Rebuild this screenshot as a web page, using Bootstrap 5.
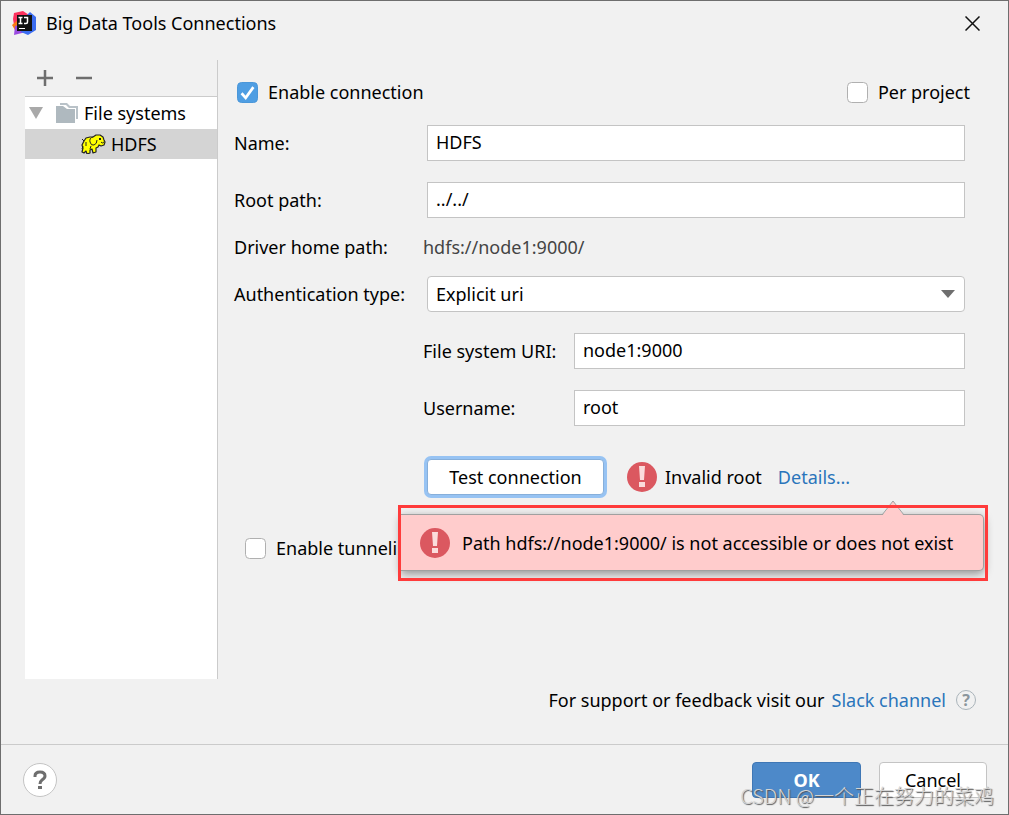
<!DOCTYPE html>
<html lang="en">
<head>
<meta charset="utf-8">
<meta name="viewport" content="width=device-width, initial-scale=1">
<title>Big Data Tools Connections</title>
<link href="https://cdn.jsdelivr.net/npm/bootstrap@5.3.0/dist/css/bootstrap.min.css" rel="stylesheet">
<style>
  body { font-family: "Noto Sans", "Noto Sans CJK SC", sans-serif; font-size: 18px; line-height: 24px; color: #000; background: #f1f1f1; }
  a { color: #2a75bb; }
  svg { display: block; flex: none; }
  .dialog { border: 1px solid #6e6e6e; }
  .titlebar { height: 44px; padding: 0 28px 0 11px; gap: 9px; }
  .icon-btn { border: 0; background: none; padding: 0; }
  .main-area { padding: 15px 32px 0 24px; }
  .tree-pane { width: 193px; margin-bottom: 65px; border-right: 1px solid #cbcbcb; }
  .tree-tools { height: 37px; padding-left: 12px; gap: 23px; border-bottom: 1px solid #cbcbcb; }
  .tree-row { height: 32px; }
  .tree-row-sel { height: 30px; background: #d4d4d4; }
  .form-pane { padding: 20px 0 32px 16px; min-width: 0; }
  .fields { padding-right: 11px; }
  .form-check-input { width: 21px; height: 21px; margin: 0; border: 1px solid #b0b0b0; border-radius: 3px; flex: none; }
  .form-check-input:checked { background-color: #4f9ee3; border-color: #4b97d9; background-size: 20px 20px;
    background-image: url("data:image/svg+xml,%3csvg xmlns='http://www.w3.org/2000/svg' viewBox='0 0 20 20'%3e%3cpath fill='none' stroke='%23fff' stroke-width='2.600' d='M4 10.500 8 15 15.500 4.500'/%3e%3c/svg%3e"); }
  .check-row { padding: 0 6px 0 3px; }
  .check-label { margin-left: 10px; }
  .lbl { width: 193px; flex: none; white-space: nowrap; }
  .lbl-sub { width: 151px; flex: none; white-space: nowrap; }
  .lbl-driver { width: 189px; flex: none; }
  .driver-path { color: #444; }
  .sub { margin-left: 189px; }
  .mt-field { margin-top: 21px; }
  .mt-text { margin-top: 17px; }
  .form-control, .form-select { height: 36px; padding: 0 8px 2px; font-size: 18px; line-height: 24px; color: #000; border: 1px solid #c4c4c4; border-radius: 0; background-color: #fff; }
  .form-select { padding-bottom: 0; border-radius: 4px; background-size: 14px 8px; background-position: right 9px center;
    background-image: url("data:image/svg+xml,%3csvg xmlns='http://www.w3.org/2000/svg' viewBox='0 0 14 8'%3e%3cpath fill='%236e6e6e' d='M0 0h14L7 8z'/%3e%3c/svg%3e"); }
  .btn { font-size: 18px; line-height: 24px; padding: 0; height: 36px; border-radius: 4px; color: #000; background: #fff; border: 1px solid #c4c4c4; }
  .test-row { margin-top: 33px; }
  .btn-test { width: 177px; border-color: #87afda; box-shadow: 0 0 0 3px #97c3f3; margin-left: 4px; margin-right: 23px; }
  .tunnel { margin: 41px 0 0 11px; }
  .callout-frame { right: -23px; top: 46px; width: 590px; padding: 9px 4px 10px 3px; z-index: 2; }
  .callout-frame::after { content: ""; position: absolute; inset: 0; border: 3px solid #ff3b3b; }
  .callout { height: 57px; padding-left: 19px; gap: 12px; background: #ffcccc; border: 1px solid #a0a0a0; border-left: 0; border-radius: 0 5px 5px 0; box-shadow: 0 3px 10px rgba(0,0,0,.4); white-space: nowrap; }
  .callout-tip { right: 79px; top: -15px; }
  .support-row { padding-right: 0; }
  .support-row a { margin: 0 10px 0 7px; }
  .support-help { width: 20px; height: 20px; border: 1px solid #aab4ba; border-radius: 50%; color: #8b969c; font-size: 16px; line-height: 18px; font-weight: 700; }
  .footer { height: 70px; border-top: 1px solid #cbcbcb; padding: 0 21px 0 22px; }
  .footer .btn { width: 108px; }
  .footer .btn-help { width: 34px; height: 34px; border-radius: 50%; }
  .footer .btn-ok { width: 109px; margin-right: 18px; background: #4d89c9; border-color: #3f77b5; color: #fff; font-weight: 700; }
  .watermark { right: 14px; bottom: 6px; font-family: "Noto Sans CJK SC", sans-serif; font-weight: 300; font-size: 20px; color: #d4d4d4; text-shadow: 1px 1px 1px #555; white-space: nowrap; pointer-events: none; }
</style>
</head>
<body>
<svg width="0" height="0" class="position-absolute" aria-hidden="true">
  <symbol id="err" viewBox="0 0 30 30"><circle cx="15" cy="15" r="15" fill="#db5860"/><path fill="#fbdcdc" d="M12 4h6l-1 14h-4zM12 20h6v5h-6z"/></symbol>
</svg>
<div class="dialog min-vh-100 d-flex flex-column">
  <header class="titlebar d-flex align-items-center">
    <svg width="25" height="24" viewBox="0 0 25 24" aria-hidden="true">
      <path fill="#fc315d" d="M2 2 11 0l6 4v8L2 14 1 8z"/><path fill="#f97a12" d="M0 14l7-6v9l-4 2z"/><path fill="#9a4be0" d="M3 15l7-2 6 8-6 1-8 2z"/><path fill="#3b6cf0" d="M15 4l3-3 6 5v13l-8 5-7-3z"/>
      <rect x="5" y="4" width="15" height="16" fill="#111"/><path fill="none" stroke="#fff" stroke-width="1.500" d="M6.500 6.500h4M8.500 6.500v6M6.500 12.500h4M12 6.500h3.500v4.500q0 1.500-1.500 1.500H12"/><path stroke="#fff" d="M7 17.500h6"/>
    </svg>
    <span>Big Data Tools Connections</span>
    <button class="icon-btn ms-auto" aria-label="Close"><svg width="15" height="15" viewBox="0 0 15 15"><path stroke="#111" stroke-width="1.500" d="M.5.5l14 14M14.500.5l-14 14"/></svg></button>
  </header>

  <main class="main-area flex-grow-1 d-flex">
    <aside class="tree-pane flex-shrink-0 d-flex flex-column">
      <div class="tree-tools d-flex align-items-center">
        <button class="icon-btn" aria-label="Add"><svg width="16" height="16" viewBox="0 0 16 16"><path stroke="#6e6e6e" stroke-width="2.500" d="M0 8h16M8 0v16"/></svg></button>
        <button class="icon-btn" aria-label="Remove"><svg width="16" height="16" viewBox="0 0 16 16"><path stroke="#6e6e6e" stroke-width="2.500" d="M0 8h16"/></svg></button>
      </div>
      <div class="bg-white flex-grow-1">
        <div class="tree-row d-flex align-items-center ps-1">
          <svg width="14" height="12" viewBox="0 0 14 12"><path fill="#a9a9a9" d="M0 0h14L7 12z"/></svg>
          <svg class="ms-2" width="33" height="20" viewBox="-5 0 33 20"><path fill="#b9c2c8" d="M4 0h7l3 3h8v13h-2V5h-7l-3-3H4z"/><path fill="#afb9bf" d="M0 3h7l4 3h8v14H0z"/></svg>
          <span>File systems</span>
        </div>
        <div class="tree-row-sel d-flex align-items-center">
          <svg class="ms-5" width="38" height="20" viewBox="-9 0 38 20"><path fill="#ff0" stroke="#222" stroke-width="1.200" stroke-linejoin="round" d="M2 7 4 4l4-1 3 0 3-2 4 0 3 2 1 3 1 2-1 3-3 1-2-1-1 2-2 1v4l-3 1-1-4-2 1 0 3-3 1-1-3-2 2-2-1 1-4-1-3z"/><path fill="none" stroke="#222" d="M11 3q-4 1-3 5t4 3q3-1 3-5M4 8v4M19 8q1 2 3 0M9 12l-1 3M2 7 0 5M1 12l-1 3"/><path fill="#222" d="M17 4h2v2h-2z"/></svg>
          <span>HDFS</span>
        </div>
      </div>
    </aside>

    <section class="form-pane flex-grow-1 d-flex flex-column">
      <div class="check-row d-flex align-items-center">
        <input class="form-check-input" type="checkbox" id="enable" checked><label for="enable" class="check-label">Enable connection</label>
        <input class="form-check-input ms-auto" type="checkbox" id="perproj"><label for="perproj" class="check-label">Per project</label>
      </div>
      <form class="fields">
        <div class="d-flex align-items-center mt-field"><label class="lbl" for="name">Name:</label><input class="form-control" id="name" value="HDFS"></div>
        <div class="d-flex align-items-center mt-field"><label class="lbl" for="root">Root path:</label><input class="form-control" id="root" value="../../"></div>
        <div class="d-flex mt-text"><span class="lbl-driver">Driver home path:</span><span class="driver-path">hdfs://node1:9000/</span></div>
        <div class="d-flex align-items-center mt-text"><label class="lbl" for="auth">Authentication type:</label><select class="form-select" id="auth"><option>Explicit uri</option></select></div>
        <div class="d-flex align-items-center mt-field sub"><label class="lbl-sub" for="uri">File system URI:</label><input class="form-control" id="uri" value="node1:9000"></div>
        <div class="d-flex align-items-center mt-field sub"><label class="lbl-sub" for="user">Username:</label><input class="form-control" id="user" value="root"></div>
        <div class="position-relative test-row">
          <div class="d-flex align-items-center sub">
            <button type="button" class="btn btn-test">Test connection</button>
            <svg width="30" height="30" aria-hidden="true"><use href="#err"/></svg>
            <span class="ms-2">Invalid root</span><a class="ms-3 text-decoration-none" href="#">Details...</a>
          </div>
          <div class="callout-frame position-absolute" role="alert">
            <div class="callout position-relative d-flex align-items-center">
              <svg class="callout-tip position-absolute" width="22" height="16" viewBox="0 0 22 16" aria-hidden="true"><path fill="#ffcccc" d="M0 16 11 1l11 15z"/><path fill="none" stroke="#a0a0a0" d="M0 15 11 1l11 14"/></svg>
              <svg width="30" height="30" aria-hidden="true"><use href="#err"/></svg>
              <span>Path hdfs://node1:9000/ is not accessible or does not exist</span>
            </div>
          </div>
        </div>
        <div class="tunnel d-flex align-items-center">
          <input class="form-check-input" type="checkbox" id="tunnel"><label for="tunnel" class="check-label">Enable tunneling</label>
        </div>
      </form>
      <div class="support-row mt-auto d-flex justify-content-end align-items-center">
        <span>For support or feedback visit our</span><a class="text-decoration-none" href="#">Slack channel</a>
        <button class="icon-btn support-help" aria-label="Support help">?</button>
      </div>
    </section>
  </main>

  <footer class="footer position-relative d-flex align-items-center">
    <button class="btn btn-help" aria-label="Help"><svg class="mx-auto" width="14" height="20" viewBox="0 0 14 20"><path fill="none" stroke="#6e6e6e" stroke-width="3" d="M2 7V6q0-4 5-4t5 4q0 2-3 4-2 1.500-2 4"/><path fill="#6e6e6e" d="M5 16h4v3H5z"/></svg></button>
    <button class="btn btn-ok ms-auto">OK</button>
    <button class="btn">Cancel</button>
    <span class="watermark position-absolute">CSDN @一个正在努力的菜鸡</span>
  </footer>
</div>
<script src="https://cdn.jsdelivr.net/npm/bootstrap@5.3.0/dist/js/bootstrap.bundle.min.js"></script>
</body>
</html>
